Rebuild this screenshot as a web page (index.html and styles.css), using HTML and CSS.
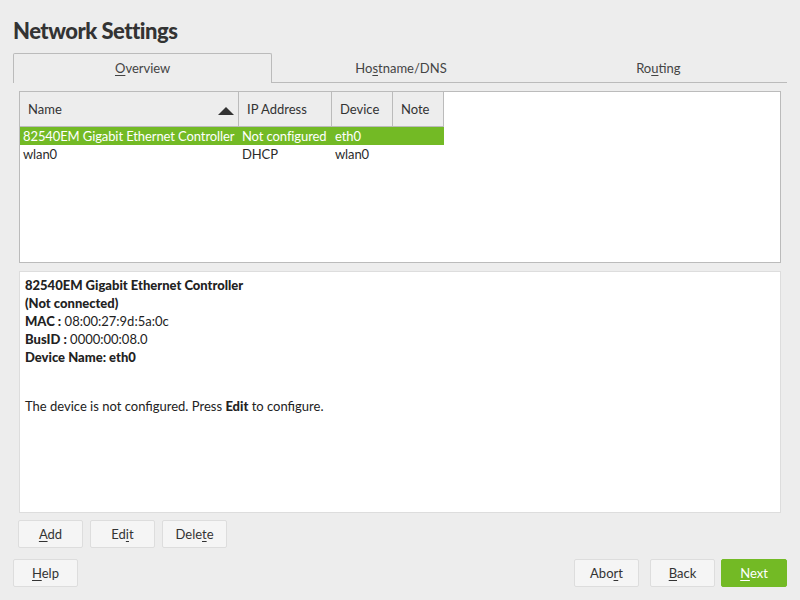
FILE: index.html
```html
<!DOCTYPE html>
<html>
<head>
<meta charset="utf-8">
<link rel="stylesheet" href="styles.css">
</head>
<body>
<div class="page">
  <h1 class="title">Network Settings</h1>
  <div class="tabs">
    <div class="tab active"><u>O</u>verview</div>
    <div class="tab">Ho<u>s</u>tname/DNS</div>
    <div class="tab">Ro<u>u</u>ting</div>
  </div>
  <div class="content">
    <div class="table">
      <div class="thead">
        <div class="th c1">Name<span class="sort"></span></div>
        <div class="th c2">IP Address</div>
        <div class="th c3">Device</div>
        <div class="th c4">Note</div>
      </div>
      <div class="row selected">
        <div class="td c1">82540EM Gigabit Ethernet Controller</div>
        <div class="td c2">Not configured</div>
        <div class="td c3">eth0</div>
        <div class="td c4"></div>
      </div>
      <div class="row">
        <div class="td c1">wlan0</div>
        <div class="td c2">DHCP</div>
        <div class="td c3">wlan0</div>
        <div class="td c4"></div>
      </div>
    </div>
    <div class="details">
      <div><b>82540EM Gigabit Ethernet Controller</b></div>
      <div><b>(Not connected)</b></div>
      <div><b>MAC :</b> 08:00:27:9d:5a:0c</div>
      <div><b>BusID :</b> 0000:00:08.0</div>
      <div><b>Device Name: eth0</b></div>
      <div class="spacer"></div>
      <div>The device is not configured. Press <b>Edit</b> to configure.</div>
    </div>
    <div class="actions">
      <button class="btn"><u>A</u>dd</button>
      <button class="btn">Ed<u>i</u>t</button>
      <button class="btn">Dele<u>t</u>e</button>
    </div>
  </div>
  <div class="footer">
    <button class="btn"><u>H</u>elp</button>
    <div class="grow"></div>
    <button class="btn">Abo<u>r</u>t</button>
    <button class="btn"><u>B</u>ack</button>
    <button class="btn primary"><u>N</u>ext</button>
  </div>
</div>
</body>
</html>
```

FILE: styles.css
```css
html, body {
  margin: 0;
  padding: 0;
  background: #ededed;
  font-family: Lato, "Noto Sans", sans-serif;
  font-size: 13px;
  color: #2b2b2b;
}
.page {
  width: 800px;
  height: 600px;
  box-sizing: border-box;
  padding: 0 13px;
  display: flex;
  flex-direction: column;
}
.title {
  margin: 16px 0 0 0;
  height: 37px;
  font-size: 22px;
  letter-spacing: -0.5px;
  font-weight: 900;
  line-height: 30px;
  color: #333;
}
.tabs {
  display: flex;
  height: 30px;
  border-bottom: 1px solid #bbb;
  box-sizing: border-box;
}
.tab {
  flex: 1;
  text-align: center;
  line-height: 30px;
  color: #444;
  box-sizing: border-box;
}
.tab.active {
  border: 1px solid #bbb;
  border-bottom: none;
  border-radius: 2px 2px 0 0;
  margin-bottom: -1px;
  background: #ededed;
  line-height: 28px;
  height: 30px;
}
u { text-decoration: underline; text-underline-offset: 2px; }
.content {
  padding: 8px 6px 0 6px;
  display: flex;
  flex-direction: column;
}
.table {
  background: #fff;
  border: 1px solid #bbb;
  height: 172px;
  box-sizing: border-box;
}
.thead, .row { display: flex; }
.thead .th {
  height: 35px;
  line-height: 34px;
  background: #ededed;
  border-right: 1px solid #bbb;
  border-bottom: 1px solid #bbb;
  padding: 0 8px;
  box-sizing: border-box;
  color: #333;
  position: relative;
}
.c1 { width: 219px; }
.c2 { width: 93px; }
.c3 { width: 61px; }
.c4 { width: 51px; }
.sort {
  position: absolute;
  right: 4px;
  top: 15px;
  width: 0;
  height: 0;
  border-left: 8px solid transparent;
  border-right: 8px solid transparent;
  border-bottom: 8px solid #333;
}
.row { height: 18px; line-height: 19px; }
.td { padding: 0 3px; box-sizing: border-box; white-space: nowrap; letter-spacing: -0.1px; }
.row.selected { background: #73ba25; color: #fff; width: 424px; }
.details {
  margin-top: 8px;
  background: #fff;
  border: 1px solid #ddd;
  height: 242px;
  box-sizing: border-box;
  padding: 4px 5px;
  line-height: 18px;
  color: #222;
}
.details b { font-weight: 900; }
.spacer { height: 31px; }
.actions {
  display: flex;
  gap: 7px;
  margin-top: 7px;
  margin-left: -1px;
}
.btn {
  width: 65px;
  height: 28px;
  background: #f5f5f5;
  border: 1px solid #ddd;
  border-radius: 2px;
  font-family: inherit;
  font-size: 13px;
  color: #333;
  padding: 0;
}
.footer {
  display: flex;
  gap: 11px;
  margin-top: 11px;
}
.grow { flex: 1; }
.btn.primary {
  background: #73ba25;
  border-color: #73ba25;
  color: #fff;
  width: 66px;
  margin-left: -5px;
}
```
